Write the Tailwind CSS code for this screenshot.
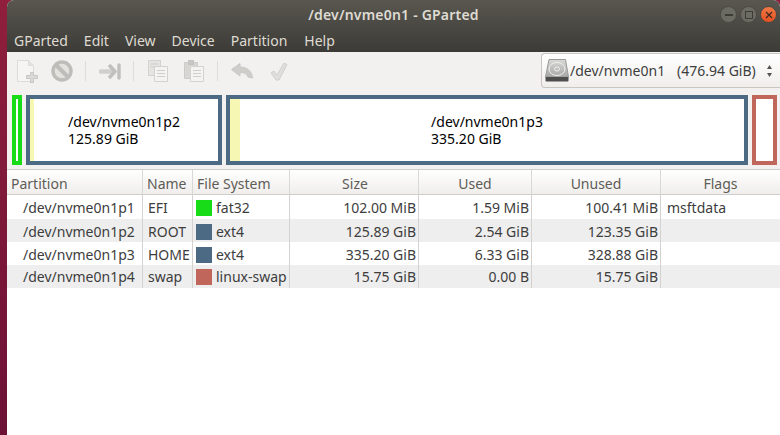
<!DOCTYPE html>
<html lang="en">
<head>
    <meta charset="UTF-8">
    <title>/dev/nvme0n1 - GParted</title>
    <script src="https://cdn.jsdelivr.net/npm/@tailwindcss/browser@4"></script>
</head>
<body class="w-[780px] h-[435px] overflow-hidden flex bg-gradient-to-b from-[#8f1f3c] to-[#6d1136] font-['Noto_Sans',sans-serif] text-[14px] text-[#3d3d3d]">
    <!-- desktop strip is the body background, window starts at x=7 -->
    <div class="ml-[7px] flex-1 flex flex-col bg-white rounded-t-[7px] overflow-hidden">
        <!-- title + menu -->
        <div class="h-[52px] shrink-0 bg-gradient-to-b from-[#59574f] to-[#3c3b37] text-[#dfdbd2]">
            <div class="h-[28px] relative flex items-center justify-center">
                <span class="font-semibold text-[14px] tracking-[0.2px] text-[#dfdbd2]">/dev/nvme0n1 - GParted</span>
                <div class="absolute right-[3px] top-[6px] flex gap-[3px]">
                    <div class="w-[17px] h-[17px] rounded-full bg-[#6b6a63] border border-[#4a4943] flex items-center justify-center">
                        <div class="w-[8px] h-[2px] bg-[#3c3b37]"></div>
                    </div>
                    <div class="w-[17px] h-[17px] rounded-full bg-[#6b6a63] border border-[#4a4943] flex items-center justify-center">
                        <div class="w-[8px] h-[8px] border border-[#3c3b37]"></div>
                    </div>
                    <div class="w-[17px] h-[17px] rounded-full bg-gradient-to-b from-[#f07746] to-[#e5501f] border border-[#4a4943] flex items-center justify-center">
                        <svg width="8" height="8" viewBox="0 0 8 8"><path d="M1 1l6 6M7 1l-6 6" stroke="#3c2a20" stroke-width="1.3"/></svg>
                    </div>
                </div>
            </div>
            <div class="h-[24px] flex items-center pl-[7px] gap-[16px] text-[14px]">
                <span>GParted</span><span>Edit</span><span>View</span><span>Device</span><span>Partition</span><span class="ml-[1px]">Help</span>
            </div>
        </div>

        <!-- toolbar -->
        <div class="h-[38px] shrink-0 bg-[#f2f1ef] flex items-center pl-[10px] relative">
            <svg class="w-[21px] h-[23px] ml-0" viewBox="0 0 21 23" fill="none">
                <path d="M.5.5h11l5 5v16H.5z" fill="#f6f5f3" stroke="#dddbd8"/>
                <path d="M11.5.5v5h5" fill="#e6e4e1" stroke="#dddbd8"/>
                <path d="M13.5 12.5h3v3h4v3h-4v4h-3v-4h-4v-3h4z" fill="#dcdad7" stroke="#c8c6c3"/>
            </svg>
            <svg class="w-[22px] h-[22px] ml-[13px]" viewBox="0 0 22 22" fill="none">
                <circle cx="11" cy="11" r="9" fill="#e4e2df" stroke="#bfbdba" stroke-width="3.5"/>
                <path d="M5 5l12 12" stroke="#bfbdba" stroke-width="4"/>
            </svg>
            <div class="w-px h-[20px] bg-[#dfddda] ml-[12px]"></div>
            <svg class="w-[22px] h-[17px] ml-[13px]" viewBox="0 0 22 17" fill="none">
                <path d="M2 8.5h10" stroke="#d2d0cd" stroke-width="4.5" stroke-linecap="round"/>
                <path d="M10 2l6 6.5-6 6.5" stroke="#c2c0bd" stroke-width="3.5" stroke-linejoin="round"/>
                <path d="M20 2v13" stroke="#c2c0bd" stroke-width="3.5" stroke-linecap="round"/>
            </svg>
            <div class="w-px h-[20px] bg-[#dfddda] ml-[12px]"></div>
            <svg class="w-[20px] h-[22px] ml-[14px]" viewBox="0 0 20 22" fill="none">
                <path d="M.5.5h12v15H.5z" fill="#e6e4e1" stroke="#d4d2cf"/>
                <path d="M2.5 4h8M2.5 7h8" stroke="#cfcdca"/>
                <path d="M6.5 6.5h13v15h-13z" fill="#f4f3f1" stroke="#d4d2cf"/>
                <path d="M9 10.500h8M9 13.500h8M9 16.500h8" stroke="#d0cecb"/>
            </svg>
            <svg class="w-[20px] h-[22px] ml-[16px]" viewBox="0 0 20 22" fill="none">
                <path d="M.5 2.500h13v16H.5z" fill="#d8d6d3" stroke="#cdcbc8"/>
                <path d="M4.500.5h5v4h-5z" fill="#c9c7c4" stroke="#c3c1be"/>
                <path d="M6.500 6.500h13v15h-13z" fill="#f4f3f1" stroke="#d4d2cf"/>
                <path d="M9 10.500h8M9 13.500h8M9 16.500h8" stroke="#d0cecb"/>
            </svg>
            <div class="w-px h-[20px] bg-[#dfddda] ml-[13px]"></div>
            <svg class="w-[22px] h-[16px] ml-[13px]" viewBox="0 0 22 16" fill="none">
                <path d="M9 .5L.5 6.500 9 13V9.500c4 0 6.500 1 8 4.500l4.500 1C21 8 16 4 9 4z" fill="#cfcdca" stroke="#c9c7c4" stroke-linejoin="round"/>
            </svg>
            <svg class="w-[18px] h-[19px] ml-[17px]" viewBox="0 0 18 19" fill="none">
                <path d="M1 11l3-2 3 4L14 1l3 1.500L9 18H6z" fill="#e0dedb" stroke="#d2d0cd" stroke-linejoin="round"/>
            </svg>

            <!-- device combo -->
            <div class="absolute right-0 top-[1px] w-[239px] h-[35px] border border-r-0 border-[#c9c5bf] rounded-l-[4px] bg-gradient-to-b from-white to-[#f0eeec] flex items-center pl-[3px]">
                <svg class="w-[24px] h-[23px] shrink-0" viewBox="0 0 24 23" fill="none">
                    <defs>
                        <linearGradient id="disk" x1="0" y1="0" x2="0" y2="1">
                            <stop offset="0" stop-color="#d8d8d6"/>
                            <stop offset="1" stop-color="#a8a8a6"/>
                        </linearGradient>
                    </defs>
                    <path d="M4 .5h16.500L23.500 18H.5z" fill="url(#disk)" stroke="#9a9a98"/>
                    <path d="M.5 18h23v3.500a1 1 0 0 1-1 1h-21a1 1 0 0 1-1-1z" fill="#4e4e4c"/>
                    <ellipse cx="12" cy="10" rx="8" ry="6.500" stroke="#efefed"/>
                    <ellipse cx="12" cy="10" rx="2.500" ry="2" stroke="#efefed"/>
                </svg>
                <span class="ml-[1px] w-[105px]">/dev/nvme0n1</span>
                <span class="ml-[2px]">(476.94 GiB)</span>
                <svg class="ml-auto mr-[7px] w-[7px] h-[14px]" viewBox="0 0 7 14"><path d="M3.500 1L6 5H1zM3.500 13L1 9h5z" fill="#55524e"/></svg>
            </div>
        </div>

        <!-- disk visual -->
        <div class="h-[80px] shrink-0 bg-[#f2f1ef] flex gap-[4px] pl-[5px] pt-[5px] text-[14px] leading-[17px] text-black border-b border-[#cfcdc9]">
            <div class="w-[10px] h-[70px] border-[4px] border-[#17dc17] bg-white"></div>
            <div class="w-[196px] h-[70px] border-[4px] border-[#4d6a85] bg-white flex">
                <div class="w-[4px] bg-[#f7f7b4]"></div>
                <div class="flex-1 flex flex-col justify-center items-center pr-[4px]">
                    <div>/dev/nvme0n1p2<br>125.89 GiB</div>
                </div>
            </div>
            <div class="w-[522px] h-[70px] border-[4px] border-[#4d6a85] bg-white flex">
                <div class="w-[10px] bg-[#f7f7b4]"></div>
                <div class="flex-1 flex flex-col justify-center items-center pr-[10px]">
                    <div>/dev/nvme0n1p3<br>335.20 GiB</div>
                </div>
            </div>
            <div class="w-[25px] h-[70px] border-[4px] border-[#c1665a] bg-white"></div>
        </div>

        <!-- partition list -->
        <div class="flex-1 bg-white">
            <div class="h-[25px] grid grid-cols-[136px_50px_97px_129px_113px_129px_119px] bg-gradient-to-b from-white to-[#f0eeec] border-b border-[#cfcdc9] text-[#5e5c57] leading-[27px]">
                <div class="pl-[4px] border-r border-[#dad8d5]">Partition</div>
                <div class="pl-[4px] border-r border-[#dad8d5]">Name</div>
                <div class="pl-[4px] border-r border-[#dad8d5]">File System</div>
                <div class="text-center pl-[2px] border-r border-[#dad8d5]">Size</div>
                <div class="text-center border-r border-[#dad8d5]">Used</div>
                <div class="text-center border-r border-[#dad8d5]">Unused</div>
                <div class="text-center">Flags</div>
            </div>

            <div class="h-[24px] grid grid-cols-[136px_50px_97px_129px_113px_129px_119px] leading-[25px]">
                <div class="pl-[16px] border-r border-[#d4d2cf]">/dev/nvme0n1p1</div>
                <div class="pl-[5px] border-r border-[#d4d2cf]">EFI</div>
                <div class="pl-[3px] flex items-center gap-[4px] border-r border-[#d4d2cf]"><span class="w-[16px] h-[16px] bg-[#17dc17]"></span>fat32</div>
                <div class="text-right pr-[2px] border-r border-[#d4d2cf]">102.00 MiB</div>
                <div class="text-right pr-[2px] border-r border-[#d4d2cf]">1.59 MiB</div>
                <div class="text-right pr-[2px] border-r border-[#d4d2cf]">100.41 MiB</div>
                <div class="pl-[6px]">msftdata</div>
            </div>
            <div class="h-[23px] grid grid-cols-[136px_50px_97px_129px_113px_129px_119px] bg-[#eeeeee] leading-[25px]">
                <div class="pl-[16px] border-r border-[#d4d2cf]">/dev/nvme0n1p2</div>
                <div class="pl-[5px] border-r border-[#d4d2cf]">ROOT</div>
                <div class="pl-[3px] flex items-center gap-[4px] border-r border-[#d4d2cf]"><span class="w-[16px] h-[16px] bg-[#4d6a85]"></span>ext4</div>
                <div class="text-right pr-[2px] border-r border-[#d4d2cf]">125.89 GiB</div>
                <div class="text-right pr-[2px] border-r border-[#d4d2cf]">2.54 GiB</div>
                <div class="text-right pr-[2px] border-r border-[#d4d2cf]">123.35 GiB</div>
                <div></div>
            </div>
            <div class="h-[23px] grid grid-cols-[136px_50px_97px_129px_113px_129px_119px] leading-[25px]">
                <div class="pl-[16px] border-r border-[#d4d2cf]">/dev/nvme0n1p3</div>
                <div class="pl-[5px] border-r border-[#d4d2cf]">HOME</div>
                <div class="pl-[3px] flex items-center gap-[4px] border-r border-[#d4d2cf]"><span class="w-[16px] h-[16px] bg-[#4d6a85]"></span>ext4</div>
                <div class="text-right pr-[2px] border-r border-[#d4d2cf]">335.20 GiB</div>
                <div class="text-right pr-[2px] border-r border-[#d4d2cf]">6.33 GiB</div>
                <div class="text-right pr-[2px] border-r border-[#d4d2cf]">328.88 GiB</div>
                <div></div>
            </div>
            <div class="h-[23px] grid grid-cols-[136px_50px_97px_129px_113px_129px_119px] bg-[#eeeeee] leading-[23px]">
                <div class="pl-[16px] border-r border-[#d4d2cf]">/dev/nvme0n1p4</div>
                <div class="pl-[5px] border-r border-[#d4d2cf]">swap</div>
                <div class="pl-[3px] flex items-center gap-[4px] border-r border-[#d4d2cf]"><span class="w-[16px] h-[16px] bg-[#c1665a]"></span>linux-swap</div>
                <div class="text-right pr-[2px] border-r border-[#d4d2cf]">15.75 GiB</div>
                <div class="text-right pr-[2px] border-r border-[#d4d2cf]">0.00 B</div>
                <div class="text-right pr-[2px] border-r border-[#d4d2cf]">15.75 GiB</div>
                <div></div>
            </div>
        </div>
    </div>
</body>
</html>
